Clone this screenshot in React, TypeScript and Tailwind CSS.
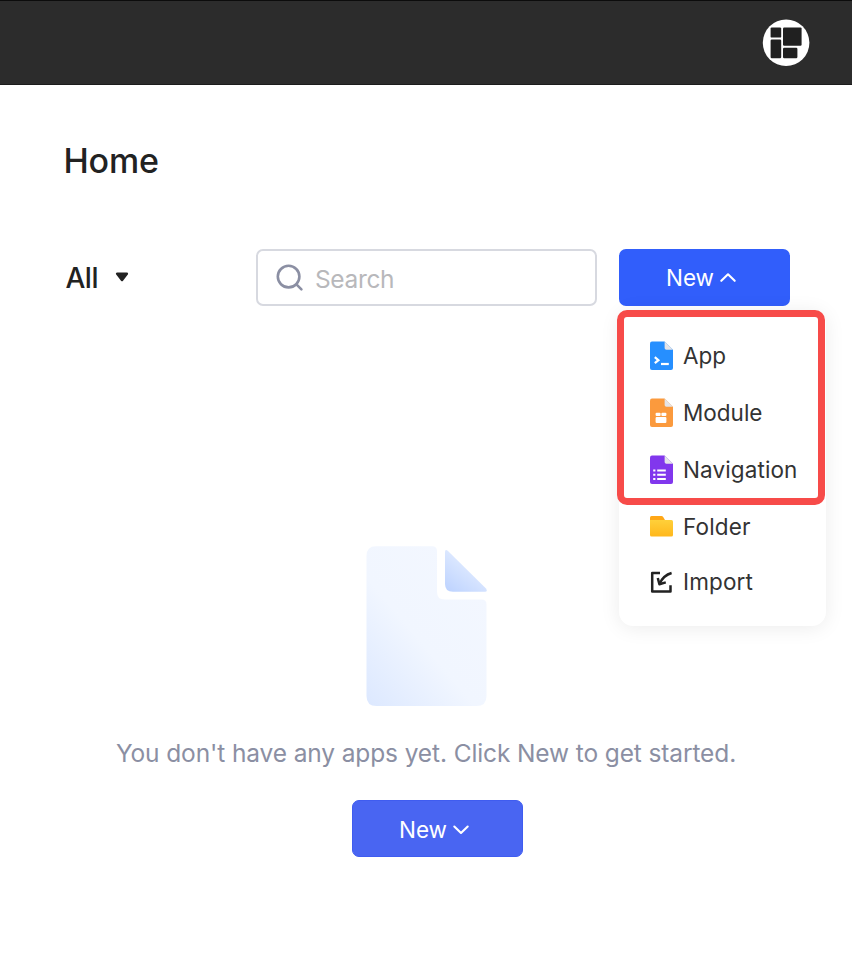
import type { ReactNode } from "react";

function Logo() {
  return (
    <svg className="h-12 w-12" viewBox="0 0 48 48" aria-hidden="true">
      <circle cx="24.1" cy="23.8" r="23.3" fill="#fff" />
      <g fill="#202020">
        <rect x="8.6" y="8.4" width="10.6" height="10.2" rx="1.2" />
        <rect x="21" y="8.4" width="18.6" height="18.4" rx="1.2" />
        <rect x="8.6" y="20.6" width="10.6" height="18.6" rx="1.2" />
        <rect x="21" y="28.8" width="14.4" height="10.4" rx="1.2" />
      </g>
    </svg>
  );
}

function Chevron({ up = false }: { up?: boolean }) {
  return (
    <svg className="h-[12px] w-[18px]" viewBox="0 0 18 12" fill="none" stroke="#fff" strokeWidth="2.1" strokeLinecap="round" strokeLinejoin="round" aria-hidden="true">
      <path d={up ? "M2.3 8.8 9 2.3l6.7 6.5" : "M2.3 2.5 9 9l6.7-6.5"} />
    </svg>
  );
}

function FileIcon({ color, children }: { color: string; children: ReactNode }) {
  return (
    <svg className="h-[29px] w-[23px]" viewBox="0 -0.4 23 29" aria-hidden="true">
      <path d="M2 0H14.6L23 8.4V26.6Q23 28.6 21 28.6H2Q0 28.6 0 26.6V2Q0 0 2 0Z" fill={color} />
      <path d="M14.6 0 23 8.4H16.4Q14.6 8.4 14.6 6.6Z" fill="#e4e4e8" />
      {children}
    </svg>
  );
}

function AppIcon() {
  return (
    <FileIcon color="#268fff">
      <path d="M4.8 15.8 8.4 18.8 4.8 21.8" fill="none" stroke="#fff" strokeWidth="2.2" />
      <path d="M11 22.6H18.8" stroke="#fff" strokeWidth="2.2" />
    </FileIcon>
  );
}

function ModuleIcon() {
  return (
    <FileIcon color="#fb9a3d">
      <g fill="#fff">
        <rect x="5.6" y="14.4" width="5" height="3.3" rx="1" />
        <rect x="11.4" y="14.4" width="5" height="3.3" rx="1" />
        <rect x="5.6" y="18.7" width="10.8" height="6" rx="1" />
      </g>
    </FileIcon>
  );
}

function NavigationIcon() {
  return (
    <FileIcon color="#8137ed">
      <path d="M3.2 15.1H5.4M7.2 15.1H15.8M3.2 19.3H5.4M7.2 19.3H15.8M3.2 23.5H5.4M7.2 23.5H15.8" stroke="#fff" strokeWidth="2" />
    </FileIcon>
  );
}

function FolderIcon() {
  return (
    <svg className="h-[21px] w-[23px]" viewBox="0 0 23 21" aria-hidden="true">
      <defs>
        <linearGradient id="folder" x1="0" y1="0" x2="0" y2="1">
          <stop stopColor="#ffd03a" />
          <stop offset="1" stopColor="#ffb71c" />
        </linearGradient>
      </defs>
      <path d="M1.5 0H11.5Q12.5 0 13.2 1L15 4V9H0V1.5Q0 0 1.5 0Z" fill="#ffa716" />
      <path d="M0 4H21.5Q23 4 23 5.5V19Q23 20.6 21.4 20.6H1.6Q0 20.6 0 19Z" fill="url(#folder)" />
    </svg>
  );
}

function ImportIcon() {
  return (
    <svg className="mt-px h-[23px] w-[23px]" viewBox="0 0 23 23" fill="none" stroke="#222" strokeWidth="2.5" strokeLinejoin="round" aria-hidden="true">
      <path d="M10 2.1H2.2V20.6H20.5V14.2" />
      <path d="M21.6 2Q13.5 4.3 9.8 12.4" />
      <path d="M7.8 7 9.4 13.2 15.8 11.4" />
    </svg>
  );
}

function SearchIcon() {
  return (
    <svg className="h-7 w-7" viewBox="0 0 28 28" fill="none" stroke="#8b8fa3" strokeWidth="2.6" strokeLinecap="round" aria-hidden="true">
      <circle cx="12.6" cy="12.6" r="10.8" />
      <path d="M20.4 20.4 25.4 25.4" />
    </svg>
  );
}

function EmptyDocument() {
  return (
    <svg className="h-[161px] w-[121px]" viewBox="0 0 121 161" aria-hidden="true">
      <defs>
        <linearGradient id="sheet" x1="0" y1="1" x2="0.8" y2="0.1">
          <stop stopColor="#dce8ff" />
          <stop offset="0.5" stopColor="#f1f6ff" />
          <stop offset="1" stopColor="#f3f7ff" />
        </linearGradient>
        <linearGradient id="fold" x1="0" y1="1" x2="0.6" y2="0.2">
          <stop stopColor="#bcd2ff" />
          <stop offset="1" stopColor="#e2ecff" />
        </linearGradient>
      </defs>
      <path d="M10 0.3H66Q71 0.3 71 5.3V46Q71 53.5 78.5 53.5H115.5Q120.5 53.5 120.5 58.5V150Q120.5 160 110.5 160H10.5Q0.5 160 0.5 150V10Q0.5 0.3 10 0.3Z" fill="url(#sheet)" />
      <path d="M79 6.5Q79 2.5 82 5L120 42.5Q122 45.8 119 45.8H87Q79 45.8 79 38Z" fill="url(#fold)" />
    </svg>
  );
}

const items = [
  { label: "App", icon: <AppIcon />, row: "h-[57px]", text: "tracking-[0px]" },
  { label: "Module", icon: <ModuleIcon />, row: "h-[57px]", text: "tracking-[0px]" },
  { label: "Navigation", icon: <NavigationIcon />, row: "h-[57px]", text: "tracking-[0.11px]" },
  { label: "Folder", icon: <FolderIcon />, row: "h-[57px]", text: "tracking-[0.15px]" },
  { label: "Import", icon: <ImportIcon />, row: "h-[54px]", text: "tracking-[0.15px]" },
];

function NewMenu() {
  return (
    <div className="absolute top-[61px] left-0 h-[316px] w-[207px] rounded-[14px] bg-white pt-[17px] shadow-[0_2px_20px_rgba(0,0,0,0.08)]">
      {items.map((item) => (
        <div key={item.label} className={`flex items-center gap-[10px] pl-[31px] ${item.row}`}>
          {item.icon}
          <span className={`text-[22.5px] leading-7 whitespace-nowrap text-[#333] ${item.text}`}>{item.label}</span>
        </div>
      ))}
      <div className="absolute top-0 left-[-2px] h-[195px] w-[208px] rounded-[10px] border-7 border-[#f74b49]" />
    </div>
  );
}

export default function App() {
  return (
    <div className="h-[959px] w-[852px] overflow-hidden bg-white font-['Inter','Liberation_Sans',sans-serif]">
      <header className="flex h-[85px] justify-end border-t border-b border-t-[#0c0c0c] border-b-[#1c1c1c] bg-[#2c2c2c] pt-[18px] pr-[42px]">
        <Logo />
      </header>
      <main>
        <h1 className="pt-[54px] pl-[63.5px] text-[34px] leading-[44px] font-medium tracking-[-0.2px] text-[#222]">Home</h1>
        <div className="mt-[66px] flex h-[57px] items-center pl-[65.5px]">
          <button className="flex w-[190.5px] items-center gap-[17px] text-[28px] leading-8 font-medium tracking-[-0.5px] text-[#222]">
            All
            <svg className="h-[11px] w-[14px]" viewBox="0 0 14 11" aria-hidden="true">
              <path d="M2.2 1.7H11.8L7 7.9Z" fill="#222" stroke="#222" strokeWidth="2.6" strokeLinejoin="round" />
            </svg>
          </button>
          <div className="flex h-[57px] w-[341px] items-center gap-[11px] rounded-[7px] border-2 border-[#d7d9e0] pl-[18px]">
            <SearchIcon />
            <span className="pt-[2px] text-[24.5px] leading-8 tracking-[-0.35px] text-[#b8b8bb]">Search</span>
          </div>
          <div className="relative ml-[22px]">
            <button className="flex h-[57px] w-[171px] items-center justify-center gap-[5px] rounded-[7px] bg-[#315efb] pt-px pr-[6px] text-[22.5px] text-white">
              New
              <Chevron up />
            </button>
            <NewMenu />
          </div>
        </div>
        <section className="flex flex-col items-center pt-[240px]">
          <EmptyDocument />
          <p className="mt-[28px] text-[24.5px] leading-9 tracking-[-0.12px] whitespace-nowrap text-[#8b8fa3]">You don't have any apps yet. Click New to get started.</p>
          <button className="mt-[29px] ml-[22px] flex h-[57px] w-[171px] items-center justify-center gap-[5px] rounded-[7px] border border-[#3f5cf0] bg-[#4965f2] pt-[2px] pr-[5px] text-[22.5px] text-white">
            New
            <Chevron />
          </button>
        </section>
      </main>
    </div>
  );
}
